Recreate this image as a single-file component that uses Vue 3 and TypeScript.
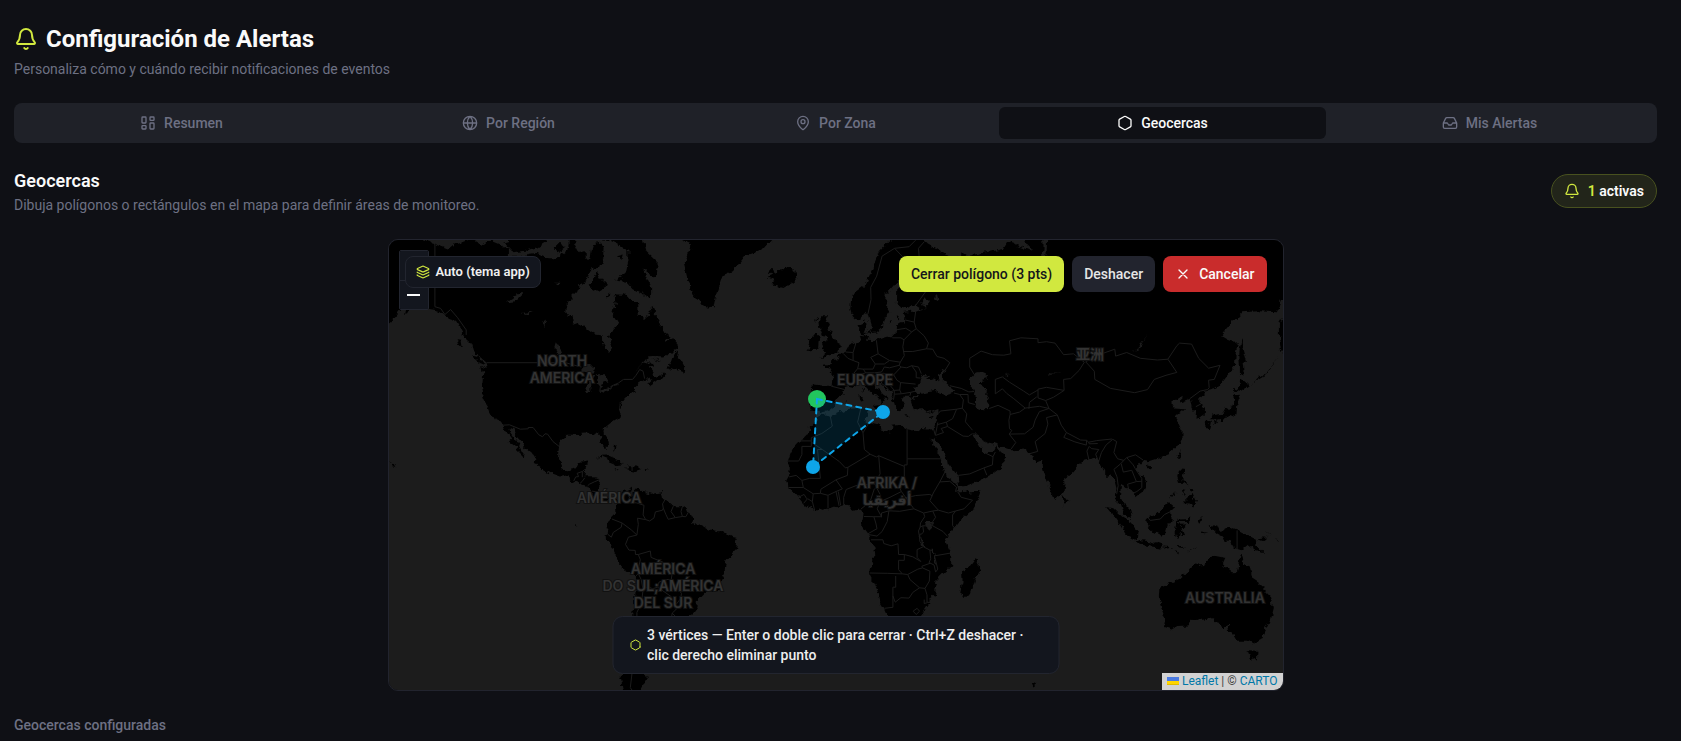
<script setup lang="ts">
import { ref } from 'vue'

type Tab = { id: string; label: string; icon: string }
type MapLabel = { lines: string[]; x: number; y: number }

const tabs: Tab[] = [
  { id: 'resumen', label: 'Resumen', icon: 'M4 3h4a1 1 0 0 1 1 1v7a1 1 0 0 1-1 1H4a1 1 0 0 1-1-1V4a1 1 0 0 1 1-1z M16 3h4a1 1 0 0 1 1 1v3a1 1 0 0 1-1 1h-4a1 1 0 0 1-1-1V4a1 1 0 0 1 1-1z M16 12h4a1 1 0 0 1 1 1v7a1 1 0 0 1-1 1h-4a1 1 0 0 1-1-1v-7a1 1 0 0 1 1-1z M4 16h4a1 1 0 0 1 1 1v3a1 1 0 0 1-1 1H4a1 1 0 0 1-1-1v-3a1 1 0 0 1 1-1z' },
  { id: 'region', label: 'Por Región', icon: 'M12 2a10 10 0 1 0 0 20 10 10 0 1 0 0-20z M12 2a14.5 14.5 0 0 0 0 20 14.5 14.5 0 0 0 0-20 M2 12h20' },
  { id: 'zona', label: 'Por Zona', icon: 'M20 10c0 4.993-5.539 10.193-7.399 11.799a1 1 0 0 1-1.202 0C9.539 20.193 4 14.993 4 10a8 8 0 0 1 16 0z M12 7a3 3 0 1 0 0 6 3 3 0 1 0 0-6z' },
  { id: 'geocercas', label: 'Geocercas', icon: 'M21 16V8a2 2 0 0 0-1-1.730l-7-4a2 2 0 0 0-2 0l-7 4A2 2 0 0 0 3 8v8a2 2 0 0 0 1 1.730l7 4a2 2 0 0 0 2 0l7-4A2 2 0 0 0 21 16z' },
  { id: 'alertas', label: 'Mis Alertas', icon: 'M22 12h-6l-2 3h-4l-2-3H2 M5.450 5.110 2 12v6a2 2 0 0 0 2 2h16a2 2 0 0 0 2-2v-6l-3.450-6.890A2 2 0 0 0 16.760 4H7.240a2 2 0 0 0-1.790 1.110z' },
]
const active = ref('geocercas')

const bell = 'M10.268 21a2 2 0 0 0 3.464 0 M3.262 15.326A1 1 0 0 0 4 17h16a1 1 0 0 0 .740-1.673C19.410 13.956 18 12.499 18 8A6 6 0 0 0 6 8c0 4.499-1.411 5.956-2.738 7.326'
const layers = 'M12.830 2.180a2 2 0 0 0-1.660 0L2.600 6.080a1 1 0 0 0 0 1.830l8.580 3.910a2 2 0 0 0 1.660 0l8.580-3.900a1 1 0 0 0 0-1.830z M2 12a1 1 0 0 0 .580.910l8.600 3.910a2 2 0 0 0 1.650 0l8.580-3.900A1 1 0 0 0 22 12 M2 17a1 1 0 0 0 .580.910l8.600 3.910a2 2 0 0 0 1.650 0l8.580-3.900A1 1 0 0 0 22 17'
const hexagon = tabs[3].icon

/* Web-mercator projection: zoom 2 (1024 px world), centred on 20°N 0°E. */
const VIEW = { width: 894, height: 450, equator: 283 }
function project(pair: string): string {
  const [lon, lat] = pair.split(',').map(Number)
  const x = VIEW.width / 2 + (lon * 1024) / 360
  const y = VIEW.equator - (1024 / (2 * Math.PI)) * Math.log(Math.tan(Math.PI / 4 + (lat * Math.PI) / 360))
  return `${x.toFixed(1)} ${y.toFixed(1)}`
}
const toPath = (line: string, close: boolean) => `M${line.trim().split(/\s+/).map(project).join('L')}${close ? 'Z' : ''}`
const shapes = (rows: string) => rows.trim().split('\n').map((r) => toPath(r, true)).join('')
const lines = (rows: string) => rows.trim().split(';').map((r) => toPath(r, false)).join('')

const land = shapes(`
-160,73 -150,70.5 -141,69.6 -136,68.9 -134,69.5 -128,70.2 -124,69.4 -121,69.8 -115,68.9 -115,67.9 -109,67.9 -108,68.3 -105,68.4 -101,67.7 -98,67.7 -97,68.4 -95.5,68.1 -94,69.3 -94,71.9 -92,71.5 -92,69.6 -90.5,68.5 -88,68.8 -88,67.9 -86.5,67.3 -85.5,69.5 -82,69.7 -81.3,69 -81.5,68 -83,66.4 -86,66.2 -87,65.3 -88,64.2 -90.5,63.6 -91,62.9 -93,62 -94.2,60.9 -94.7,60 -94.8,59 -93,58.8 -92.5,57 -90.8,57.3 -88,56.5 -85,55.3 -82.3,55.1 -82.2,53 -81.4,52.2 -79.8,51.2 -78.6,52.5 -79.8,54.7 -76.6,57.2 -78.5,58.8 -77.4,60.8 -78,62.4 -75.7,62.3 -73.8,62.4 -71.4,61.1 -69.6,61.1 -69.3,59 -67.6,58.3 -66.2,58.8 -64.6,60.3 -63,58.5 -61.4,57 -60.5,55.8 -58,54.8 -60,53.5 -57.3,54.3 -55.7,53.2 -55.7,52.1 -58.5,51.2 -60,50.2 -64.4,50.3 -66.4,50.2 -67.2,49.5 -69.9,47.7 -71,46.8 -68.5,48.6 -66.5,49.1 -64.6,49 -64.3,48.4 -65.8,47.9 -64.8,47 -64,46.1 -61.5,45.9 -60.6,47 -60,46.2 -61,45.2 -63.5,44.5 -65.5,43.5 -66.1,44.3 -64.5,45.3 -67,44.9 -69.1,44 -70.6,43 -70.8,42.3 -70,41.8 -72,41.2 -74,40.7 -74,39.7 -75.3,38.6 -75.9,37.2 -76.3,39.1 -76.3,37 -75.6,35.5 -76.5,34.6 -78,33.9 -79.5,33 -81.2,31.8 -81.4,30.5 -80.5,28.3 -80.1,26.5 -80.4,25.2 -81.3,25.8 -82.8,27.8 -82.9,29.1 -84.1,30.1 -85.3,29.7 -88,30.3 -89.5,30.2 -89.3,29.2 -90.3,29.2 -91.8,29.6 -94.3,29.6 -95.5,28.8 -97.2,27.6 -97.3,26 -97.8,22.4 -96.3,19.3 -94.5,18.2 -92,18.6 -90.8,19.2 -90.4,21 -87.2,21.5 -86.9,20.6 -87.7,19.5 -88.2,18.2 -88.4,16.5 -88.8,15.9 -86,15.9 -84,15.8 -83.2,15 -83.6,12.5 -83.7,11 -82.5,9.4 -81.2,8.8 -79.6,9.5 -77.4,8.7 -76.8,8 -75.6,9.6 -75.3,10.8 -74.2,11.3 -71.8,12.3 -71.7,11 -72,9.6 -71.2,9.2 -71.2,10.8 -70,12.1 -68.3,10.9 -66,10.5 -64.5,10.2 -62,10.7 -61,9.6 -60.8,8.4 -58.5,7.2 -57,5.9 -54,5.9 -52,4.7 -51,2.2 -50,1.7 -50.6,0 -48.5,-0.5 -48.8,-1.5 -47.3,-0.7 -44.5,-2.3 -43.3,-2.4 -41.3,-2.9 -40,-2.8 -38.5,-3.8 -37.2,-4.8 -35.4,-5.2 -34.8,-7 -35.1,-9 -37,-11 -38.5,-13 -39,-15 -39.2,-18 -40.9,-21.5 -42,-23 -44.5,-23.1 -46.5,-24.1 -48.5,-26 -48.7,-28.4 -50.5,-30.5 -52.2,-32.3 -53.8,-34.4 -56,-34.9 -58.3,-34 -57.2,-35.5 -56.7,-36.5 -57.8,-38.2 -62,-39 -62.3,-40.8 -65,-41 -64,-42.4 -65.3,-43.5 -65.4,-45 -67.5,-46 -65.8,-47.6 -69,-50.5 -69,-52 -73,-52 -75,-50.5 -75.5,-48 -74.5,-46.5 -75,-44 -73,-43 -72.8,-41.8 -73.8,-40 -73.5,-37.2 -72.5,-35 -71.6,-32.5 -71.6,-30 -70.6,-26 -70.3,-20 -70.4,-18.4 -72,-17.2 -75,-15.5 -76.3,-14 -77.2,-12 -78.8,-8.5 -80,-6.8 -81.2,-6 -81.3,-4.6 -80.3,-3.4 -80,-2.5 -81,-2.2 -80.8,-1 -80,0.5 -79,1.4 -77.5,3 -77.2,4.5 -77.5,7 -78.3,8.5 -79.5,8.8 -80.4,8.1 -80.4,7.3 -81.7,7.8 -83,8.2 -83.7,9 -85,9.8 -85.8,10.5 -87.6,12.9 -89.5,13.5 -92.2,14.5 -94.5,16.2 -96.5,15.7 -99.5,16.7 -101.8,17.8 -104.5,19.1 -105.6,20.4 -105.3,21.6 -107,24 -109.4,25.7 -110.5,27.3 -112.2,29 -113.1,31.2 -114.8,31.8 -114.5,30 -112.8,28 -111.3,26 -110.3,24.2 -109.4,23.1 -110,22.9 -112.2,24.8 -112.3,26 -115,27.8 -114.2,28.5 -115.8,30.3 -117.2,32.6 -118.4,33.8 -120.6,34.6 -121.9,36.6 -122.5,37.8 -123.8,39.3 -124.4,40.4 -124.1,42 -124.5,43 -124,46.2 -124.7,48.3 -122.5,47.5 -122.8,49 -125,50.2 -127.5,51.5 -128.5,53.5 -130.3,54.5 -131.5,55.5 -134,58 -137,58.5 -139.8,59.6 -144,60 -148,60.4 -149,59.8 -151.8,59.2 -151,61.2 -154,59.2 -156.5,57.5 -160,56
-128.3,50.7 -125.3,50.2 -123.5,48.4 -125.5,48.9
-133,54.1 -131.7,54 -131.2,52.2 -132.5,53
-80,73 -73,71.3 -68,70.2 -67,68.8 -62,67 -62,66.5 -64,65 -68,66.2 -65,63.5 -65,61.9 -68.5,63 -66,61.9 -71.5,63.2 -74,64.4 -78,64.5 -74,65.5 -73,67.5 -73,68.5 -77,69.5 -80,70 -89,70.5 -89,73
-87,64 -84,65.8 -82,64.5 -80.3,63.8 -83.5,62.9 -86,63.6
-117,73 -117,70.6 -112,70.3 -117,69.8 -113.5,68.5 -109,68.7 -105,69.1 -101.8,69.8 -104,71 -105,73
-99,69 -97,69.7 -95.5,69 -98,68.5
-80,62.6 -79.3,62.3 -80.3,61.8
-77,68 -75,68.2 -75.5,67.4
-59.3,47.7 -56,46.9 -55.5,47.2 -53.2,46.7 -53,48 -54,49.3 -56,50 -55.5,51.5 -57,51 -58,49
-64.3,49.9 -61.8,49.1 -63,49.3
-85,21.9 -83,23 -80.5,23.1 -77,21.7 -74.2,20.2 -77.7,19.9 -78,20.8 -81.5,22.1 -83,22.7
-74.4,18.4 -72.5,18.5 -73,19.9 -70,19.8 -68.4,18.6 -71,17.8
-78.3,18.4 -76.3,18.2 -77.5,17.8
-67.2,18.5 -65.7,18.4 -67.2,18
-78,26.8 -77,26.5 -77.8,25 -78.3,24.6
-61.8,10.8 -61,10.7 -61.5,10.1
-156,20.2 -154.9,19.6 -155.8,19
-157,21.3 -156.2,20.9 -156.7,20.8
-91.3,0.1 -90.6,-0.8 -91.3,-0.8
-57,73 -54,70 -51,69.5 -53.5,67 -52.3,65 -50.5,62.5 -48,61 -44.5,60 -43,60.2 -42,62.5 -40,65.3 -36,66 -32,68 -26,68.8 -22,70.3 -20,73
-24,65.6 -22.3,66.4 -21.5,65.5 -20,66 -18,66.1 -16,66.5 -14.6,66.2 -13.6,65 -15,64.3 -18.5,63.4 -22.6,63.9 -22,64.5 -24,64.9 -22,65.3
-5.7,50.1 -3.5,50.3 -1,50.8 1.4,51.2 0.7,51.6 1.7,52.7 0.3,52.9 -0.1,54 -1.5,55 -2,55.8 -3,56 -2,57.5 -4,57.7 -3.1,58.6 -5,58.6 -5.8,57.5 -5.5,56 -4.8,55 -3.2,54.9 -3,53.5 -4.5,53.3 -4.2,52.5 -5.2,51.9 -3,51.5 -4.3,51.1
-10,51.6 -6.3,52.2 -6.1,53.5 -5.6,54.6 -7.3,55.3 -8.5,54.4 -10,54.2 -9,53.2
-7,58.4 -6.3,58.2 -7.3,57.3
25,73 19,70 15,68.5 13,66.5 10.5,64 5.5,62.3 5,60 5.5,58.8 7,58 8.5,58.2 10.5,59.4 11.3,58.8 12.8,56 13,55.4 14.2,55.5 16,56.3 16.7,57.8 18.7,59.4 17.2,60.7 17.5,62.2 21,64 22.2,65.7 25.3,65.1 24.5,64.4 21.5,63 21.4,60.8 23,59.9 28,60.5 30,59.9 28,59.5 23.5,59.2 24.4,58.3 24.2,57.1 22.6,57.6 21.1,56.8 21,55.3 19.8,54.5 18.5,54.7 14.2,53.9 11,54 10.8,54.4 9.8,55 10.8,56.4 10.5,57.6 8.2,57 8.1,55.6 8.8,54 7,53.4 4.8,53 3.5,51.5 1.6,50.9 0.2,49.7 -1.3,49.6 -1.5,48.7 -4.6,48.5 -2.5,47.4 -1.2,46 -1.5,43.4 -4,43.4 -8,43.7 -9.2,43 -8.7,41 -9.5,38.7 -8.9,37 -6.4,36.9 -5.6,36 -2.2,36.7 -0.6,37.7 0.1,38.8 -0.3,39.5 0.8,40.8 3.2,41.9 3.1,43.1 4.6,43.4 6.5,43.1 8.8,44.4 10.3,43.5 11,42.4 12.3,41.7 13.8,41.2 15.5,40 16,38.8 15.7,38 16.6,38.7 17.1,39.2 16.7,40.4 18.4,39.9 18.3,40.3 16,41.5 16,42 14.2,42.5 13.5,43.6 12.4,44.3 12.4,45.4 13.7,45.7 13.9,44.9 15.2,44.2 16.5,43.4 18.5,42.4 19.4,41.7 19.4,40.5 20.8,38.9 21.2,37.7 21.8,36.8 23,36.5 23.2,37.4 24,37.8 22.9,39.2 22.8,40.4 24,40 24,40.8 26,40.8 26.4,40.2 28.8,41 29,41.3 28,42 27.7,42.6 28.6,43.7 29.7,45.1 30.8,46.4 33,46.1 32.5,45.4 33.5,44.6 35.4,45.1 36.5,45.4 35,46.2 38.5,47.2 37.8,46.2 37.5,44.8 39.5,43.6 41.5,42.4 41.5,41.5 39,41 36.5,41.3 35,42 32,41.7 29.2,41.2 29,40.5 26.2,39.5 26.8,38.2 27.4,37 28.3,36.7 30.6,36.8 32.3,36.1 34,36.3 36,36.9 36,35.5 35,33 34.2,31.3 32.3,31.2 30,31.4 29,30.9 25,31.6 23,32.6 20.2,32.3 20,30.9 19,30.3 15.6,31.3 15.3,32.3 11.5,33.1 10.1,34 11,35.3 11,37 9.8,37.3 3,36.8 -1.5,35.2 -5.3,35.8 -6,35.7 -6.9,34 -9.8,31.5 -9.7,29.8 -11.5,28.2 -13,27.7 -14.8,26 -16,23.8 -17,21 -16.2,19 -16.5,16.5 -17.5,14.7 -16.7,12.4 -15,11 -13.3,9 -11.5,6.8 -7.6,4.4 -4,5.2 -2,4.8 1,5.9 4.3,6.4 6,4.3 8.5,4.7 9.7,3.8 9.4,1 8.8,-0.8 11.8,-4.8 12.3,-6.1 13.4,-8.5 13.8,-11 12.5,-13.5 11.8,-16 12,-18 14.5,-22.5 15.2,-27 17,-29.5 18.3,-32 18.4,-34.1 20,-34.8 22.5,-34.1 25.7,-34 28.5,-32.6 31.3,-29.4 32.7,-27.5 32.9,-25.8 35.3,-24.4 35.3,-21.5 34.8,-20 37,-17.8 40.5,-15 40.5,-11 39.3,-8 38.8,-6 39.5,-4.3 41.5,-2 44,1.2 47.8,4.5 50,8.2 51.1,11.8 49,11.3 44.5,10.5 43.2,11.5 43,12.7 41,14.7 39.3,15.7 37.3,18.8 37.2,21 35.5,24 33.8,27.2 32.6,30 33.5,28 34.3,27.8 34.9,29.4 34.7,28 37.2,25 39,22.2 39.3,20.5 41.5,18 42.7,16.4 43.3,12.8 45,12.8 48.8,14 52.2,15.7 55,17 57.8,19 59.8,22.5 58.5,23.7 56.5,26 56,24.8 54,24.2 51.6,24.2 51.3,26 50.7,25.4 50,26.7 48.2,29.5 48,30 50,30 51.5,27.9 54.5,26.6 57,27 57.5,25.6 61.5,25.1 66.5,25.3 67.5,23.9 70,22.8 69,22.3 70.3,20.9 72.5,21.7 72.8,19 74,15 75.5,11.5 77,8.1 78.2,9 79.8,10.3 80.3,13.2 80.2,15.5 82.3,16.7 85,19.5 87,21.5 90,22 91.8,22.5 92.3,20.7 94.3,18 94.3,16 96.5,16.5 97.7,15.5 98.6,12 98.3,8.2 100.3,6.3 101.4,2.8 104.1,1.4 103.4,4.5 101,6.9 99.8,9.5 100.2,13.4 101.5,12.7 102.8,11.6 104.8,10.4 104.8,8.7 107,10.4 109.2,11.9 109,14.5 106.5,18 105.8,19.2 108,21.6 110,21.3 110,20.4 110.5,21.3 113.8,22.3 117,23.5 119.5,25.5 121.8,28.5 121.8,30.9 120.5,33.5 119.3,35 122.4,37.1 119,37.3 117.8,38.9 121.5,40.8 121.3,39 124.5,40 125,38 126.6,36.5 126.4,34.4 129.2,35.3 129.4,37 127.6,39.6 130.5,42.3 133,42.8 136,44.5 140.3,48.5 140.5,51 141.3,53.2 137.5,54 135.3,54.8 139,57.2 142.5,59.3 149,59.5 155,59.3 157,61.7 160,62 160,73 74.5,73 74,68 71.5,66.4 73,69 72.5,73 67,73 67,69.7 69,68.7 67,69 60.5,69.8 59,68.9 53,68.5 46,68 44,68.5 44,66.2 39.8,65.6 40,65 38,64 35,64.3 33,66.7 38,66.1 41,66.7 41,67.7 33,69.4 31,70 30,73
158,59 155.7,57 155.7,55 156.5,51.5 158,51
12.5,38 15.6,38.2 15.1,36.7
8.3,41 9.7,41 9.6,39.2 8.5,39
8.7,42.5 9.4,43 9.3,41.5
23.6,35.5 26.2,35.2 24.8,34.9
32.4,35 34.5,35.6 33.5,34.6
11,55.7 12.6,56 12.2,55
9.9,55.5 10.7,55.4 10.5,55
18.2,57.6 19,57.9 18.4,57
22,58.5 23.2,58.6 22.2,58
2.4,39.6 3.3,39.8 3,39.3
49.3,-12 50.5,-15.8 49.5,-18 47.2,-24.8 45.2,-25.5 43.7,-23.5 44.5,-20 44.3,-16.5 47,-15
79.8,9.5 80.2,9.7 81.8,7.5 81,6.1 80,6.2
95.3,5.6 97.5,5.2 100.3,2.5 103.5,0.3 106,-3 105.8,-5.8 104.5,-5.8 102,-4 100.4,-1 98.5,1.8
105.3,-6.7 106.8,-6 110.8,-6.5 114.4,-7.7 114.4,-8.7 108,-7.8
115,-8.2 117.5,-8.4 119,-8.4 116,-8.9
119.8,-8.5 122.8,-8.3 121,-9
123.6,-10.3 127,-8.4 125,-9.3
119,-9.5 120.7,-10 120,-10.2
109.6,2 111.3,2.5 113,3.2 115,5 117,7 119.2,5.2 117.8,4 118,1 116.5,-1 116,-3.8 114.5,-4 111.8,-3.3 110,-1.5 109,0.5
119.8,0.5 121,1.2 125,1.5 124,0.4 120.3,0.4 121,-1 123.3,-0.8 121.8,-2 122.8,-4.5 121.5,-4.6 121,-2.8 120.4,-5.5 119.5,-5.3 119,-3
128,2 128.7,1.3 128,-0.8 127.6,1
128,-3 130.8,-3.4 130,-3.6 128,-3.4
120.6,18.5 122.2,18.4 121.6,16 122,14.5 124,12.8 122,13.6 120.6,14 120,16
122,7 123.5,8.6 125.5,9.8 126.5,7.5 125.6,5.8 124,6.8
122,11.8 123,11.5 122.2,10.6
122.7,10.6 123.4,10.8 123,9.2
124.4,12.5 125.4,12.4 125.6,11.2 124.7,11
117.2,8.5 119.5,11.2 118.5,9.5
121.5,25.2 121,22 120.1,23
108.7,19 110.5,20.1 111,19.5 109.5,18.3
130,33.5 131.8,33.5 131.3,31.4 130.3,31.2
131,34.3 133,35.5 136,35.8 137,37.3 139,38 140,39.8 140.3,41.2 141.5,41.3 142,39.5 141,38 140.8,35.7 139,34.8 137,34.6 135.8,33.5 135,34.6 132.5,34.2
132.4,33.4 134.5,34.2 133.2,32.9
140,42.5 140,41.6 141,42.5 143.3,42 145.5,43.3 144,44.1 141.8,45.4 141.5,43.3
142,46 143.3,46.5 143,49 144.5,49 143.2,52 143,54.3 142.3,53.5 141.8,51 142,48
146,43.8 150,46 155.5,50.4 150,45.6
131,-0.8 134,-0.9 135,-3.2 137.8,-1.5 141,-2.6 145.8,-5 147.8,-6 147.2,-6.9 150.5,-10.5 147.5,-9.8 144.5,-7.6 142.5,-9.2 139,-8.1 138.5,-6.5 134,-4 132.8,-2.8
148.4,-5.7 150,-6.3 152.2,-4.3 151.5,-5.1 150,-5.5
150.8,-2.7 152.8,-4 152.3,-3.6
154.7,-5.4 155.9,-6.8 155.2,-6.3
113.7,-22.5 114.2,-21.8 117,-20.7 119,-20 121.5,-19 122.2,-17.2 123.6,-17.3 124.5,-16 126.5,-14 128,-15 129.8,-14.9 130.8,-12.4 132.5,-12 132.6,-11.3 137,-12.2 135.8,-14.8 139.2,-17.4 141,-17.3 141.6,-13.5 142.5,-10.8 143.7,-14.3 145.3,-15 146.3,-18.8 149,-20.5 150.8,-23.2 153,-25.3 153.6,-28.5 152.5,-32.3 150.2,-36.5 149.9,-37.5 146.3,-39 144.5,-38.2 141,-38.2 139.5,-36 138.2,-35.5 137.8,-33 136,-35 134,-32.8 131.2,-31.5 126,-32.3 123.8,-33.9 120,-34 118,-35 115.2,-34.3 115.8,-32 114.5,-29 113.5,-26
144.7,-40.8 148.2,-40.9 148,-43 146,-43.5
68.8,-48.8 70.4,-49.2 69.4,-49.7
`)

const lakes = shapes(`
47,45 49,46.6 51.5,46.9 53,46.5 53,45 51,44.6 50.3,44.3 53,42 52.8,41 53.9,39 53.8,36.9 51,36.8 49,37.6 49.3,39.5 49.5,40.3 48,42 47.5,43.2
-92,46.7 -89,48 -88.2,48.7 -86,48.7 -84.7,46.8 -87.5,46.5 -90,46.8
-87.8,42 -87.5,44.5 -86,45.9 -85,45.8 -86.4,44 -86.3,42.2 -87.3,41.7
-84.5,46 -81,46 -80,44.5 -81.7,44.3 -82.4,43.1 -83.5,44 -83.3,45
-83.2,42 -80.5,42.7 -79,42.8 -81.5,41.6
-79.7,43.3 -77,43.9 -76.3,44 -76.5,43.5 -79,43.3
-98.5,53.5 -97,52 -96.5,50.5 -97.3,50.5 -99,52.5
-116,61 -112,62.5 -109.5,62.8 -113,61.2
-125,66 -121,67 -117.5,66.3 -120,65 -123,65.2
-111,59.2 -106,59.4 -109,58.8
-103,58 -101.8,57.5 -102.2,56.5
-99.5,64.2 -96.5,64.2 -98,63.8
31.8,0.3 34,0.3 34,-1.5 32.8,-2.6 31.7,-1.5
104,51.5 107.5,52.5 109.8,55.6 108.3,53.8 105,51.6
31,60 33,61 31.5,61.5 30,61
34.5,61.5 36,61 35.5,62.5
74,46 76,46.7 79,46.6 76,46.4
58.5,45.6 60,46.4 61,46.4 59.5,46
29.3,-3.5 29.7,-3.7 31,-8.5 30.4,-8.5
34,-9.6 34.5,-9.8 35,-14.2 34.5,-14
`)

const borders = lines(`
-122.8,49 -95,49 -93,48.6 -89.5,48; -82.5,45.3 -83,42 -79,42.8 -79,43.3 -76.5,44.1 -74.7,45 -71.5,45 -70.3,46 -69,47.4 -67.8,47 -67.3,45.2;
-117.1,32.5 -114.8,32.6 -111,31.3 -108.2,31.4 -108.2,31.8 -106.5,31.8 -104.5,29.6 -103.2,29 -102.3,29.9 -101.4,29.8 -99.5,27.5 -97.2,25.9;
-141,70 -141,60.3 -139,60 -137.5,58.9 -135.5,59.8 -133,58.3 -130,56 -130,55;
-92.2,14.6 -91.5,16 -90.5,16.1 -91,17.2 -89.2,17.8 -88.3,18.5; -89.2,17.8 -89.2,15.9; -88.3,15.7 -89.3,14.4 -90,13.8; -83.2,15 -85,14.3 -86.7,13.5 -87.3,13; -83.7,10.9 -85.7,11.1; -71.7,19.7 -71.7,18;
-71.3,11.8 -72.8,10 -72.4,7.4 -70,7 -67.5,6.2 -67.8,2.8 -66.9,1.2 -65.5,0.7 -64,1.8 -63.5,3.9 -61,4.5 -60.7,5.2;
-60,8.3 -61,6.7 -60.7,5.2 -59.8,3 -59,1.3 -56.5,1.9 -54,2.3 -52.8,2.2 -51.7,4.1; -57.2,5.9 -58,4 -56.5,1.9; -54,5.8 -54.5,4 -54,2.3;
-66.9,1.2 -69.8,1.7 -69.5,-0.5 -70,-4.2 -72,-2.4 -75.2,0 -78.8,1.4; -75.2,0 -75.5,-1.5 -78.3,-3.3 -79,-5 -80.3,-3.9; -70,-4.2 -73,-5 -74,-7.5 -72.8,-9.5 -70.6,-9.6 -70.5,-11 -69.5,-11 -65.3,-9.8 -65,-12 -60.5,-13.8 -60,-16.2 -58.3,-16.3 -57.7,-18 -58,-20;
-69.5,-11 -68.8,-12.8 -69.3,-15 -69.2,-17 -69.5,-17.5 -70.4,-18.3; -69.5,-17.5 -68.5,-19.5 -67.8,-22.9 -66.2,-21.8 -64.5,-22.5 -62.7,-22 -62.2,-20.3 -59,-19.4 -58,-20 -57.9,-22.1 -55.8,-22.3 -54.3,-24 -54.6,-25.6; -62.7,-22 -58,-25 -58.6,-27.3 -56,-27.3 -54.6,-25.6 -53.7,-26.8 -57.6,-30.2 -53.4,-33.7; -57.6,-30.2 -58.3,-34; -67.8,-22.9 -68.4,-27 -70,-30 -70,-33.5 -71.2,-38 -71.8,-42 -71.6,-46 -72.3,-50 -70,-52;
-2,35.1 -1.3,32.2 -5,30 -8.7,28.7 -8.7,27.3 -4.8,25; -13.2,27.7 -8.7,27.7; -8.7,27.3 -8.7,26 -12,26 -12,23.4 -13.1,21.3 -17,21.3; -4.8,25 -6.5,25 -5.5,15.5 -9.3,15.5 -12,14.8; -16.5,16 -14,16.5 -12,14.8 -11.5,12.4 -16.7,12.4; -4.8,25 1.2,21.1 3.3,19 4.2,19.2 12,23.5 10,25 9.5,30.2 7.6,33.4 8.6,36.9; 9.5,30.2 11.5,33.1;
12,23.5 14.2,22.6 15,23 24,19.5 24,15.7 22,13 23,11 19,9 15.5,7.5 14.5,5 16,2.2; 25,31.6 25,22 37,22; 24,19.5 24,20 25,20 25,22; 23,11 27.4,5 22.4,4.1 18.6,4.3 16,3.5 16,2; 15,23 15.5,17 13.5,13.7 7,13 3.6,11.7 2.7,9 2.7,6.4; 13.5,13.7 14.2,12.5 15.5,10; 13.5,12 12,7.5 8.7,4.8; 4.2,19.2 4,16.5 0,15 -5.3,11.8 -5.5,10.4 -2.8,9.7 0,11 2.2,11.9 0,15; -2.8,9.7 -2.8,5.1; 0,11 1.1,6; 0.8,11 1.6,6.2; -7.5,4.4 -8.3,7.5 -8,10.2 -5.5,10.4; -8,10.2 -11.5,12.4; -11.4,6.9 -10,8.5 -8.3,7.5; -13.2,9 -11.2,10 -10.3,8.5;
38.5,18 36.5,14.3 34.2,10.5 33,7.8 36,4.5 39.5,3.5 42,4.2 45,5 48,8 44,9 42.8,10.9; 36.5,14.3 40,14.5 42.4,12.5 42,11 43.2,11.5; 42,4.2 41,2.8 41,-0.9 41.6,-1.7; 34,-1 37.6,-3 39.2,-4.7; 34,-1 34,0.5 35,2 34,4.2 36,4.5; 24,8.7 27.9,9.6 33,10 33.9,9.5; 27.4,5 30.8,3.5 34,4.2; 30.8,3.5 31.2,2.2 29.7,0 29.6,-1.4 30.5,-1 34,-1; 29.6,-1.4 29,-2.8 29.3,-4.5 30.8,-3.2 30.5,-1; 29.3,-4.5 29.5,-6.5 30.7,-8.3 33,-9.5 34,-9.6; 34.6,-11.5 40.4,-10.5; 33,-9.5 33.3,-12.5 32.7,-13.8 34.5,-14.6 35,-17 35.8,-16 34.6,-11.5;
30.7,-8.3 28.5,-9.3 28.5,-12 29.8,-13.4 27,-11.8 24,-11 22,-11 21.8,-7.3 19.4,-8 16.8,-7.2 16.5,-5.9 12.3,-5.9; 24,-11 24,-13 22,-13 22,-16.2 23.3,-17.6 25.2,-17.8; 11.8,-17.3 18,-17.4 23.3,-17.6; 25.2,-17.8 28.8,-16 30.4,-15.6 33,-16.7 32.8,-20 31.3,-22.4 29.4,-22.2 26,-19.5 25.2,-17.8; 30.4,-15.6 30.2,-15 33.2,-14; 21,-18.3 21,-22 20,-22 20,-28.4 17,-28.7; 20,-24.8 20.8,-26.8 22.8,-25.4 25.7,-25.5 27,-23.7 29.4,-22.2; 31.3,-22.4 32,-24.5 32,-26.8 32.9,-26.9; 27.1,-29.6 28.5,-28.7 29.4,-29.6 28.2,-30.6 27.1,-29.6; 31,-26 31,-27.2 32,-27; 11.1,-4 14.4,-4.6 16.2,-3 18,0.5 18.6,4.3; 9.8,2.3 13.3,2.2 14,0 14.4,-2 11.2,-3.8; 13.3,2.2 16,2.2;
-8.8,41.9 -6.5,41.8 -7,39.5 -7.4,37.2; -1.7,43.3 3.1,42.4; 2.5,51.1 4.2,50 6,49.5 8.1,49 7.6,47.6 6,46.3 7,45.8 7.5,43.8; 3.4,51.4 6,51.3 7,53.3; 6,51.3 6,49.5; 8.7,54.9 9.8,54.8; 14.2,53.9 14.8,51 12.2,50.2 13.8,48.7 17,48.7 18.8,49.5 14.8,51; 7.6,47.6 9.6,47.5 13,47.5 13.8,48.7; 7,45.8 10.4,46.6 13.6,46.6 16,46.8 17,48 18.8,47.8 22.2,48.4 22.6,49.1 18.8,49.5; 9.6,47.5 10.4,46.6; 22.6,49.1 24,50.6 23.5,52.5 23.9,54 22.8,54.4 19.8,54.4; 22.2,48.4 22.9,48 20.3,46.1 18.8,45.9 16.6,46.5 13.6,45.8; 18.8,45.9 19,44.9 16,45.2 16,44 18.4,42.6; 20.3,46.1 21.4,44.8 22.7,44.2 28,43.8; 22.7,44.2 22.4,42.3 20.5,42.2 19,43.5 19,44.9; 22.4,42.3 23,41.3 26.3,41.7 28,42; 26.3,41.7 26,40.8; 20.5,42.2 20.5,41.2 23,41.3; 19.4,41.9 20.5,42.2; 20.5,41.2 20.2,39.7;
22.9,48 24.9,47.8 26.6,48.3 28.2,46.8 28.2,45.4 29.7,45.3; 26.6,48.3 29,48 30,46.4; 38.2,47.1 40,49 38,50 35.5,50.4 34,52 31.8,52.1 27,51.5 23.6,51.5; 31.8,52.1 32.5,53.3 31,54.8 28.2,56.2 26.6,55.6 23.9,54; 28.2,56.2 27.5,57.5 28,59.4; 21,56 24.5,56.3 26.6,55.6; 24.3,57.9 27.5,57.5; 28,60.5 31.5,62.8 29.8,65 29,69 31,69.8; 24,65.8 23.7,67.8 20.6,69; 11.2,59 12.3,61.5 12.2,63.5 14.3,65.2 16.2,68 20.6,69 25.7,69.2 28,70;
41.5,41.5 43.5,41.1 44.8,39.7 44.4,37.4 42.4,37.1 36.7,36.6 36,35.9; 40,43.4 44,42.7 46.7,41.8 48.5,41.9; 43.5,41.1 46.4,41.1 46.5,38.9 48.8,38.4; 44.4,37.4 46,35.8 45.5,33.5 48,31; 42.4,37.1 41,34.4 38.8,33.4 35.8,32.7; 38.8,33.4 39.2,32.1 37,31.5 37.8,30.3 35,29.4; 39.2,32.1 44.7,29.2 46.5,29.1 48,30; 34.9,29.4 35.5,32 35.8,33.3; 34.3,31.3 34.9,29.5; 43,16.5 47,17 52,19 55,20 55.2,22.7 56,24.2; 52,19 53,16.6; 51.5,24.3 55.2,22.7;
48.5,46.3 47,48 47,50 51,51.6 55,50.8 59,50.7 61.5,51 61,53.8 65,54.4 71,54.2 71,53.4 74,53.6 77,53.3 80,50.8 83.5,51 87.3,49.1 85.5,47.2 82.5,45.2 80,45 80.2,42.2 74,43 71,42.5 71,40.2 73.7,39.5 76.5,40.4 80.2,42.2; 56,41.3 56,45 58.5,45.6 61,44.3 66,42 68,41 71,42.3; 56,41.3 58.5,42.6 60,41.4 62.5,40 66.5,37.4; 53.9,37.3 57,38.2 61.2,36.6 61.2,35.6 64.5,36.3 66.5,37.4 71.5,37.9 74.9,37.3; 67.8,37.2 68,39 70.6,40.5; 73.7,39.5 74.9,37.3 77.8,35.5 79.2,32.5 81,30.3; 61.2,35.6 60.8,34 61,31.4 61.8,30.9 60.9,29.8 63.2,27.2 61.6,25.2; 60.9,29.8 66.3,29.9 69.3,31.9 70,34 71.5,36.4 74.9,37.3; 68.2,23.7 70.9,24.4 70,27.5 73.5,30 74.5,32.8 74,34.7 77.8,35.5;
81,30.3 86,28 88.1,27.9 88,26.4 84,27.4 80.1,28.8 81,30.3; 88.1,27.9 88.8,27.3 91.7,27.8 97,28.3; 88.8,27.3 89,26.8 92,26.9; 88.9,21.7 88.2,24.5 89,26 89.8,25.3 92.4,25 91.3,23.5 92.3,21 93.3,24 95,26.5 97.3,28.2 98.7,27.5 97.7,24 99,22 101.2,21.5 100,20.3 97.7,18.5 98.8,16 99.2,13 98.7,10.2; 100.3,20.3 101,17.6 104,18.2 104.8,16.3 105.6,14.4 107.5,14.5; 101.2,21.5 102.2,22.4 104.5,20 105.2,18.8 107.5,15.5 107.5,12.3 105.8,11 104.5,10.4; 105.6,14.4 102.5,13.5 102.9,11.7; 102.2,22.4 105.3,23.3 108,21.6;
87.8,49.2 92,50.7 98,52 98.3,50.5 102.2,51.3 107,50 113,49.6 116.7,49.8 119.8,46.7 116,46 111.9,45 109.5,42.4 105,41.6 96.5,42.7 91,45 90.8,47 87.8,49.2; 116.7,49.8 119.9,52.8 120.8,53.3 125,53.1 127.5,50 131,47.7 135,48.4 133,45 131,44.8 131.2,42.9 130.6,42.4 128,42 124.4,40; 126.5,37.8 128.4,38.6; 109.6,2 110.5,0.9 114,1.4 115.5,3 117.8,4.1; 141,-2.6 141,-9.1
`)

const mapLabels: MapLabel[] = [
  { lines: ['NORTH', 'AMERICA'], x: 173, y: 126 },
  { lines: ['EUROPE'], x: 476, y: 145 },
  { lines: ['AMÉRICA'], x: 220, y: 263 },
  { lines: ['AMÉRICA', 'DO SUL;AMÉRICA', 'DEL SUR'], x: 274, y: 334 },
  { lines: ['AFRIKA /', 'أفريقيا'], x: 498, y: 248 },
  { lines: ['亚洲'], x: 701, y: 119 },
  { lines: ['AUSTRALIA'], x: 836, y: 363 },
]

const vertices = [
  { x: 428, y: 159, r: 9, first: true },
  { x: 494, y: 172, r: 7, first: false },
  { x: 424, y: 227, r: 7, first: false },
]
const outline = vertices.map((v) => `${v.x},${v.y}`).join(' ')
</script>

<template>
  <main class="page">
    <header class="page-head">
      <h1>
        <svg class="icon icon-lg lime" viewBox="0 0 24 24" aria-hidden="true"><path :d="bell" /></svg>
        Configuración de Alertas
      </h1>
      <p>Personaliza cómo y cuándo recibir notificaciones de eventos</p>
    </header>

    <div class="tabs" role="tablist">
      <button
        v-for="tab in tabs"
        :key="tab.id"
        type="button"
        role="tab"
        class="tab"
        :class="{ active: active === tab.id }"
        :aria-selected="active === tab.id"
        @click="active = tab.id"
      >
        <svg class="icon" viewBox="0 0 24 24" aria-hidden="true"><path :d="tab.icon" /></svg>
        {{ tab.label }}
      </button>
    </div>

    <section class="section-head">
      <div>
        <h2>Geocercas</h2>
        <p>Dibuja polígonos o rectángulos en el mapa para definir áreas de monitoreo.</p>
      </div>
      <div class="pill">
        <svg class="icon lime" viewBox="0 0 24 24" aria-hidden="true"><path :d="bell" /></svg>
        <span><span class="lime">1</span> activas</span>
      </div>
    </section>

    <section class="map">
      <svg class="canvas" :viewBox="`0 0 ${VIEW.width} ${VIEW.height}`" preserveAspectRatio="xMidYMid slice" role="img" aria-label="Mapa">
        <defs>
          <filter id="rough" x="0" y="0" width="100%" height="100%" filterUnits="userSpaceOnUse" color-interpolation-filters="sRGB">
            <feTurbulence type="fractalNoise" baseFrequency="0.15" numOctaves="3" seed="4" result="noise" />
            <feDisplacementMap in="SourceGraphic" in2="noise" scale="7" xChannelSelector="R" yChannelSelector="G" />
          </filter>
        </defs>
        <rect class="sea" :width="VIEW.width" :height="VIEW.height" />
        <g filter="url(#rough)">
          <path class="land" :d="land" />
          <path class="sea" :d="lakes" />
        </g>
        <path class="border" :d="borders" />
        <g v-for="label in mapLabels" :key="label.x" class="label">
          <text v-for="(line, i) in label.lines" :key="line" :x="label.x" :y="label.y + i * 17">{{ line }}</text>
        </g>
        <circle v-for="v in vertices" :key="v.x" :cx="v.x" :cy="v.y" :r="v.r" :class="v.first ? 'vertex-first' : 'vertex'" />
        <polygon class="fence" :points="outline" />
      </svg>

      <div class="zoom">
        <button type="button" aria-label="Acercar"></button>
        <button type="button" aria-label="Alejar"><span class="minus"></span></button>
      </div>

      <button type="button" class="layer-btn">
        <svg class="icon icon-sm lime" viewBox="0 0 24 24" aria-hidden="true"><path :d="layers" /></svg>
        Auto (tema app)
      </button>

      <div class="actions">
        <button type="button" class="btn primary">Cerrar polígono (3 pts)</button>
        <button type="button" class="btn secondary">Deshacer</button>
        <button type="button" class="btn danger">
          <svg class="icon" viewBox="0 0 24 24" aria-hidden="true"><path d="M18 6 6 18 M6 6l12 12" /></svg>
          Cancelar
        </button>
      </div>

      <div class="hint">
        <svg class="icon icon-xs lime" viewBox="0 0 24 24" aria-hidden="true"><path :d="hexagon" /></svg>
        <span>3 vértices — Enter o doble clic para cerrar · Ctrl+Z deshacer · clic derecho eliminar punto</span>
      </div>

      <div class="attribution">
        <a href="#leaflet"><svg class="flag" viewBox="0 0 12 8" aria-hidden="true"><path fill="#4c7be1" d="M0 0h12v4H0z" /><path fill="#ffd500" d="M0 4h12v3H0z" /><path fill="#e0bc00" d="M0 7h12v1H0z" /></svg> Leaflet</a>
        <span> | © </span><a href="#carto">CARTO</a>
      </div>
    </section>

    <h3 class="list-title">Geocercas configuradas</h3>
  </main>
</template>

<style>
html,
body {
  background: #0f1015;
}
body {
  overflow: hidden;
}
</style>

<style scoped>
.page {
  --lime: #d1e83f;
  --muted: #6d7083;
  display: flex;
  flex-direction: column;
  gap: 24px;
  box-sizing: border-box;
  padding: 23px 24px 0 14px;
  background: #0f1015;
  color: #fafafa;
  font: 14px/20px Roboto, 'Liberation Sans', sans-serif;
}
h1, h2, h3, p { margin: 0; }
button { font: inherit; cursor: pointer; }
p { color: var(--muted); }
.icon {
  flex: none;
  width: 16px;
  height: 16px;
  fill: none;
  stroke: currentColor;
  stroke-width: 2;
  stroke-linecap: round;
  stroke-linejoin: round;
}
.icon-lg { width: 24px; height: 24px; }
.icon-sm { width: 14px; height: 14px; }
.icon-xs { width: 12px; height: 12px; }
.lime { color: var(--lime); }
.page-head {
  display: flex;
  flex-direction: column;
  gap: 4px;
}
h1 {
  display: flex;
  align-items: center;
  gap: 8px;
  font-size: 24px;
  line-height: 32px;
  font-weight: 700;
}
.tabs {
  display: grid;
  grid-template-columns: repeat(5, 1fr);
  padding: 4px;
  border-radius: 8px;
  background: #1f2128;
}
.tab {
  display: flex;
  align-items: center;
  justify-content: center;
  gap: 8px;
  height: 32px;
  padding: 0 12px;
  border: 0;
  border-radius: 6px;
  background: transparent;
  color: var(--muted);
  font-weight: 500;
}
.tab.active {
  background: #0f1015;
  color: #fafafa;
}
.section-head {
  display: flex;
  align-items: center;
  justify-content: space-between;
}
h2 {
  font-size: 18px;
  line-height: 28px;
  font-weight: 600;
}
.pill {
  display: flex;
  align-items: center;
  gap: 8px;
  padding: 6px 12px;
  border: 1px solid #48511f;
  border-radius: 17px;
  background: #22251a;
  font-weight: 600;
}
.map {
  position: relative;
  box-sizing: border-box;
  width: 100%;
  max-width: 896px;
  margin: 0 auto;
  border: 1px solid #22242e;
  border-radius: 10px;
  overflow: hidden;
}
.canvas {
  display: block;
  width: 100%;
  height: 450px;
}
.sea { fill: #1c1c1c; }
.land { fill: #000; }
.border {
  fill: none;
  stroke: #1c1c1c;
  stroke-width: 1;
  stroke-linejoin: round;
}
.label {
  fill: #333;
  stroke: #111;
  stroke-width: 2px;
  paint-order: stroke;
  font: 600 14px Inter, 'Noto Sans CJK SC', 'DejaVu Sans', sans-serif;
  text-anchor: middle;
}
.vertex { fill: #0ea5e9; }
.vertex-first { fill: #22c55e; }
.fence {
  fill: #0ea5e9;
  fill-opacity: 0.15;
  stroke: #0ea5e9;
  stroke-width: 2;
  stroke-linecap: round;
  stroke-dasharray: 5 5;
}
.zoom {
  position: absolute;
  top: 10px;
  left: 10px;
  display: flex;
  flex-direction: column;
  overflow: hidden;
  border: 1px solid #22252f;
  border-radius: 2px;
}
.zoom button {
  display: grid;
  place-items: center;
  width: 28px;
  height: 29px;
  padding: 0;
  border: 0;
  background: #13161e;
}
.zoom button + button { border-top: 1px solid #22252f; }
.minus {
  width: 13px;
  height: 2px;
  background: #fafafa;
}
.layer-btn {
  position: absolute;
  top: 16px;
  left: 16px;
  display: flex;
  align-items: center;
  gap: 6px;
  height: 32px;
  padding: 0 10px;
  border: 1px solid #22252f;
  border-radius: 8px;
  background: #13161e;
  color: #f0f0f0;
  font-size: 13px;
  font-weight: 600;
}
.actions {
  position: absolute;
  top: 16px;
  right: 16px;
  display: flex;
  gap: 8px;
}
.btn {
  display: flex;
  align-items: center;
  gap: 8px;
  height: 36px;
  padding: 0 12px;
  border: 0;
  border-radius: 8px;
  font-weight: 500;
}
.primary { background: var(--lime); color: #14161a; }
.secondary { background: #22242e; color: #e6e6e6; }
.danger { background: #c92c2c; color: #fafafa; }
.hint {
  position: absolute;
  bottom: 16px;
  left: 50%;
  display: flex;
  align-items: center;
  gap: 6px;
  box-sizing: border-box;
  width: 50%;
  padding: 8px 16px;
  transform: translateX(-50%);
  border: 1px solid #22252f;
  border-radius: 10px;
  background: #13161e;
  color: #eee;
  font-weight: 500;
}
.attribution {
  position: absolute;
  right: 0;
  bottom: 0;
  padding: 0 5px;
  background: #d2d2d2;
  color: #444;
  font-size: 12px;
  line-height: 17px;
}
.attribution a {
  color: #0078a8;
  text-decoration: none;
}
.flag {
  width: 12px;
  height: 8px;
}
.list-title {
  color: var(--muted);
  font-size: 14px;
  line-height: 20px;
  font-weight: 500;
}
</style>
